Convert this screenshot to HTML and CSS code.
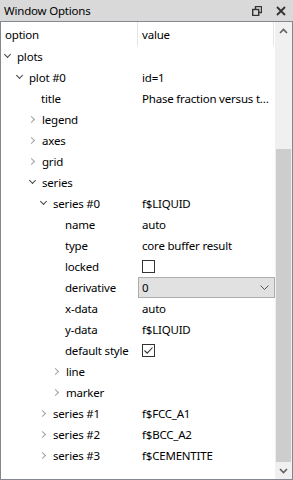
FILE: index.html
```html
<!DOCTYPE html>
<html lang="en">
<head>
    <meta charset="UTF-8">
    <title>Window Options</title>
    <link rel="stylesheet" href="styles.css">
</head>
<body>

    <div class="window">
        <!-- Barre de titre -->
        <div class="titlebar">
            <span class="title">Window Options</span>
            <svg class="tb-icon" width="10" height="10" viewBox="0 0 10 10">
                <rect x="3.5" y="0.5" width="6" height="6" fill="none" stroke="#333" stroke-width="1.4"/>
                <rect x="0.7" y="3.5" width="6" height="6" fill="#d9d9d9" stroke="#333" stroke-width="1.4"/>
            </svg>
            <svg class="tb-icon close" width="10" height="10" viewBox="0 0 10 10">
                <path d="M1 1 L9 9 M9 1 L1 9" stroke="#333" stroke-width="1.8"/>
            </svg>
        </div>

        <div class="panel">
            <div class="tree">
                <div class="header">
                    <div class="hcell name">option</div>
                    <div class="hcell value">value</div>
                </div>

                <div class="row"><div class="name l0"><span class="arrow open"></span>plots</div><div class="value"></div></div>
                <div class="row"><div class="name l1"><span class="arrow open"></span>plot #0</div><div class="value">id=1</div></div>
                <div class="row"><div class="name l2">title</div><div class="value">Phase fraction versus t...</div></div>
                <div class="row"><div class="name l2"><span class="arrow"></span>legend</div><div class="value"></div></div>
                <div class="row"><div class="name l2"><span class="arrow"></span>axes</div><div class="value"></div></div>
                <div class="row"><div class="name l2"><span class="arrow"></span>grid</div><div class="value"></div></div>
                <div class="row"><div class="name l2"><span class="arrow open"></span>series</div><div class="value"></div></div>
                <div class="row"><div class="name l3"><span class="arrow open"></span>series #0</div><div class="value">f$LIQUID</div></div>
                <div class="row"><div class="name l4">name</div><div class="value">auto</div></div>
                <div class="row"><div class="name l4">type</div><div class="value">core buffer result</div></div>
                <div class="row"><div class="name l4">locked</div><div class="value"><span class="check"></span></div></div>
                <div class="row"><div class="name l4">derivative</div>
                    <div class="value combo-cell">
                        <div class="combo">
                            <span>0</span>
                            <svg width="9" height="5" viewBox="0 0 9 5"><path d="M0.5 0.5 L4.5 4.5 L8.5 0.5" fill="none" stroke="#555" stroke-width="1"/></svg>
                        </div>
                    </div>
                </div>
                <div class="row"><div class="name l4">x-data</div><div class="value">auto</div></div>
                <div class="row"><div class="name l4">y-data</div><div class="value">f$LIQUID</div></div>
                <div class="row"><div class="name l4">default style</div>
                    <div class="value"><span class="check">
                        <svg width="11" height="11" viewBox="0 0 11 11"><path d="M1.5 5.5 L4.2 8.2 L9.5 2.5" fill="none" stroke="#333" stroke-width="1.1"/></svg>
                    </span></div>
                </div>
                <div class="row"><div class="name l4"><span class="arrow"></span>line</div><div class="value"></div></div>
                <div class="row"><div class="name l4"><span class="arrow"></span>marker</div><div class="value"></div></div>
                <div class="row"><div class="name l3"><span class="arrow"></span>series #1</div><div class="value">f$FCC_A1</div></div>
                <div class="row"><div class="name l3"><span class="arrow"></span>series #2</div><div class="value">f$BCC_A2</div></div>
                <div class="row"><div class="name l3"><span class="arrow"></span>series #3</div><div class="value">f$CEMENTITE</div></div>
            </div>

            <!-- Barre de défilement -->
            <div class="scrollbar">
                <div class="sb-btn">
                    <svg width="9" height="6" viewBox="0 0 9 6"><path d="M1 5 L4.5 1.5 L8 5" fill="none" stroke="#606060" stroke-width="1.6"/></svg>
                </div>
                <div class="sb-track">
                    <div class="sb-thumb"></div>
                </div>
                <div class="sb-btn">
                    <svg width="9" height="6" viewBox="0 0 9 6"><path d="M1 1 L4.5 4.5 L8 1" fill="none" stroke="#606060" stroke-width="1.6"/></svg>
                </div>
            </div>
        </div>
    </div>

</body>
</html>
```

FILE: styles.css
```css
body {
    margin: 0;
    font-family: "Noto Sans", "Open Sans", sans-serif;
    font-size: 11.5px;
    letter-spacing: -0.2px;
    color: #000;
    background-color: #fff;
}

.window {
    width: 293px;
    height: 480px;
    display: flex;
    flex-direction: column;
}

.titlebar {
    height: 21px;
    background-color: #d9d9d9;
    display: flex;
    align-items: center;
    padding-left: 4px;
    box-sizing: border-box;
}

.title {
    flex: 1;
}

.tb-icon {
    margin-right: 14px;
}

.tb-icon.close {
    margin-right: 7px;
}

.panel {
    flex: 1;
    display: flex;
    border: 1px solid #828790;
    min-height: 0;
}

.tree {
    flex: 1;
    display: flex;
    flex-direction: column;
}

.header {
    height: 24px;
    display: flex;
    flex-shrink: 0;
}

.hcell {
    display: flex;
    align-items: center;
    box-sizing: border-box;
}

.hcell.name {
    width: 137px;
    flex-shrink: 0;
    padding-left: 4px;
    border-right: 1px solid #e5e5e5;
}

.hcell.value {
    flex: 1;
    padding-left: 4px;
    border-right: 1px solid #e5e5e5;
    margin-right: 1px;
}

.row {
    height: 21px;
    display: flex;
    align-items: center;
    flex-shrink: 0;
}

.name {
    width: 137px;
    flex-shrink: 0;
    box-sizing: border-box;
    display: flex;
    align-items: center;
    white-space: nowrap;
}

.value {
    flex: 1;
    padding-left: 4px;
    white-space: nowrap;
    overflow: hidden;
    display: flex;
    align-items: center;
}

.l0 { padding-left: 3px; }
.l1 { padding-left: 15px; }
.l2 { padding-left: 27px; }
.l3 { padding-left: 39px; }
.l4 { padding-left: 51px; }

.l2, .l4 {
    padding-left: 40px;
}

.l4 {
    padding-left: 64px;
}

.l2 .arrow, .l4 .arrow {
    margin-left: -12px;
}

.arrow {
    width: 7px;
    height: 7px;
    margin-right: 6px;
    position: relative;
}

/* chevron fermé */
.arrow::before {
    content: "";
    position: absolute;
    left: 0;
    top: 1px;
    width: 4px;
    height: 4px;
    border-right: 1px solid #a0a0a0;
    border-bottom: 1px solid #a0a0a0;
    transform: rotate(-45deg);
}

/* chevron ouvert */
.arrow.open::before {
    left: 1px;
    top: -1px;
    border-color: #444;
    transform: rotate(45deg);
}

.check {
    width: 11px;
    height: 11px;
    border: 1px solid #333;
    display: flex;
}

.combo-cell {
    padding-left: 0;
    height: 21px;
}

.combo {
    flex: 1;
    height: 21px;
    box-sizing: border-box;
    background-color: #e1e1e1;
    border: 1px solid #adadad;
    display: flex;
    align-items: center;
    justify-content: space-between;
    padding: 0 5px 0 3px;
}

.scrollbar {
    width: 17px;
    background-color: #f0f0f0;
    display: flex;
    flex-direction: column;
}

.sb-btn {
    height: 17px;
    display: flex;
    align-items: center;
    justify-content: center;
}

.sb-track {
    flex: 1;
    display: flex;
    flex-direction: column;
    justify-content: flex-end;
}

.sb-thumb {
    height: 313px;
    margin: 0 1px;
    background-color: #cdcdcd;
}
```
